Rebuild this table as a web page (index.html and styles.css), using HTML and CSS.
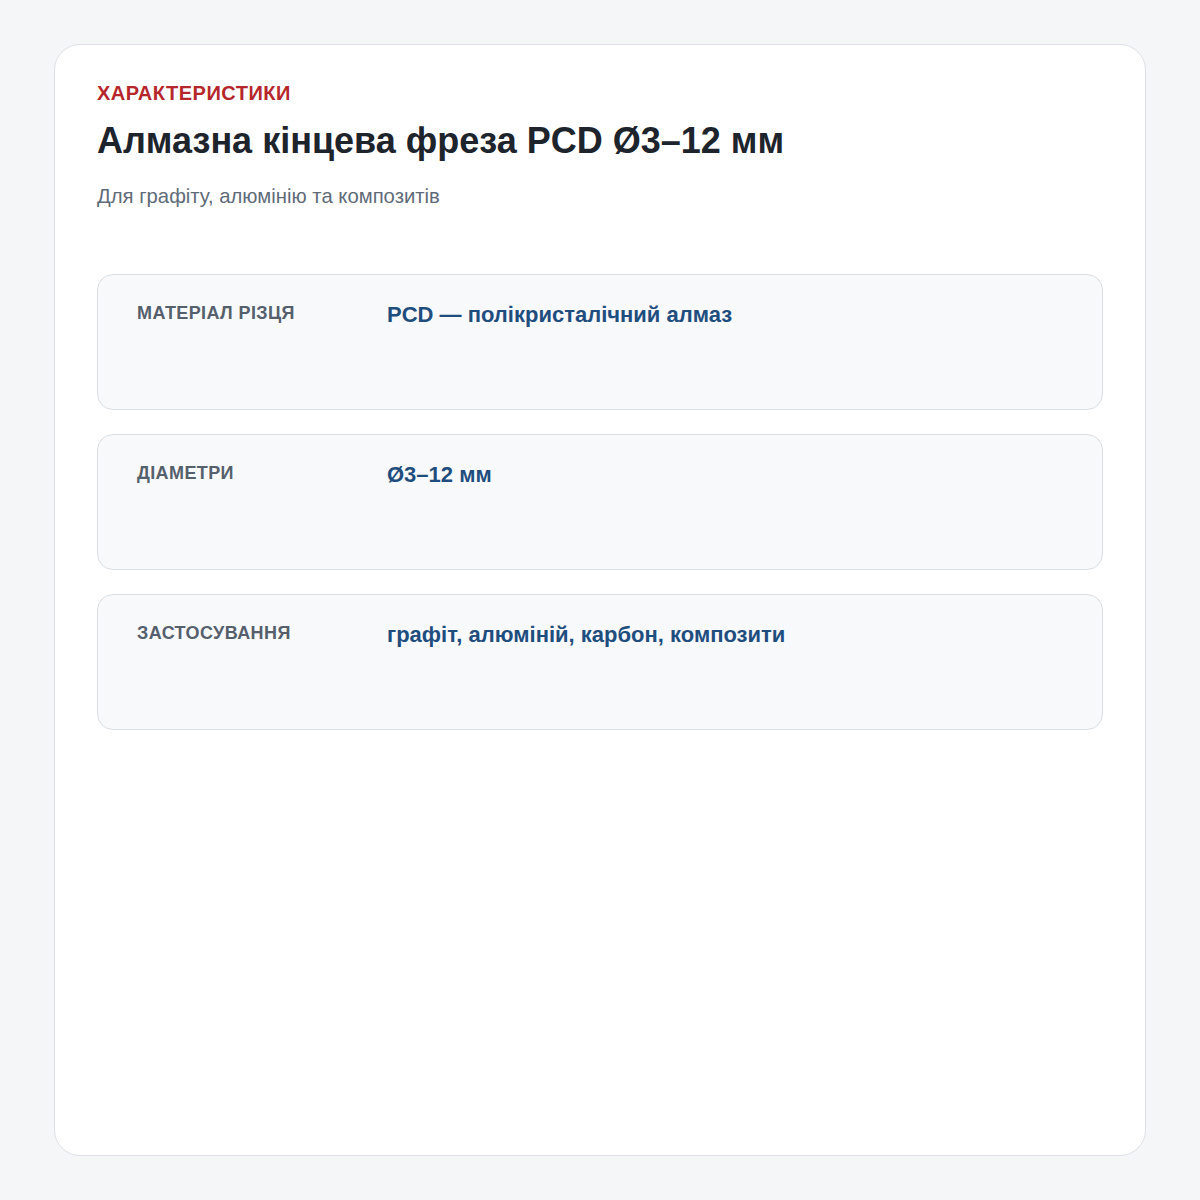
FILE: index.html
```html
<!DOCTYPE html>
<html lang="uk">
<head>
<meta charset="utf-8">
<link rel="stylesheet" href="styles.css">
</head>
<body>
<main class="card">
  <div class="eyebrow">Характеристики</div>
  <h1 class="title">Алмазна кінцева фреза PCD Ø3–12 мм</h1>
  <p class="subtitle">Для графіту, алюмінію та композитів</p>
  <div class="specs">
    <div class="spec">
      <div class="label">Матеріал різця</div>
      <div class="value">PCD — полікристалічний алмаз</div>
    </div>
    <div class="spec">
      <div class="label">Діаметри</div>
      <div class="value">Ø3–12 мм</div>
    </div>
    <div class="spec">
      <div class="label">Застосування</div>
      <div class="value">графіт, алюміній, карбон, композити</div>
    </div>
  </div>
</main>
</body>
</html>
```
FILE: styles.css
```css
* { box-sizing: border-box; }
html, body { margin: 0; }
body {
  background: #f5f6f8;
  font-family: "Liberation Sans", Arial, sans-serif;
  padding: 44px 54px;
}
.card {
  background: #ffffff;
  border: 1.5px solid #dde1e7;
  border-radius: 26px;
  height: 1112px;
  padding: 36px 42px;
}
.eyebrow {
  color: #b5272b;
  font-size: 20px;
  font-weight: 700;
  text-transform: uppercase;
  letter-spacing: 0.5px;
  line-height: 24px;
}
.title {
  margin: 14px 0 0;
  color: #1d242c;
  font-size: 36px;
  font-weight: 700;
  line-height: 44px;
}
.subtitle {
  margin: 21px 0 0;
  color: #5f6b78;
  font-size: 20.3px;
  line-height: 24px;
}
.specs {
  margin-top: 66px;
  display: flex;
  flex-direction: column;
  gap: 24px;
}
.spec {
  background: #f7f9fb;
  border: 1.5px solid #d9dee4;
  border-radius: 16px;
  height: 136px;
  padding: 26px 39px;
  display: grid;
  grid-template-columns: 250px 1fr;
  align-items: start;
}
.label {
  color: #56606c;
  font-size: 18px;
  font-weight: 700;
  text-transform: uppercase;
  letter-spacing: 0.4px;
  line-height: 24px;
}
.value {
  color: #1f4e7e;
  font-size: 22px;
  font-weight: 700;
  line-height: 28px;
}
```
